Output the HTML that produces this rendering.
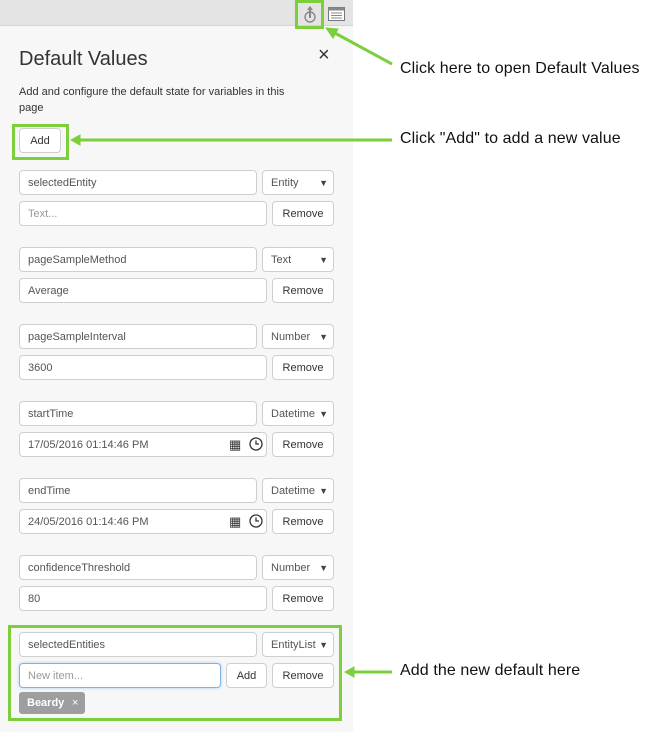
<!DOCTYPE html>
<html><head><meta charset="utf-8"><style>
*{box-sizing:border-box;margin:0;padding:0}
body{width:648px;height:732px;background:#fff;position:relative;font-family:"Liberation Sans",sans-serif;overflow:hidden}
.panel{position:absolute;left:0;top:0;width:353px;height:732px;background:#f7f7f7}
.top{position:absolute;left:0;top:0;width:353px;height:26px;background:#e4e4e4;border-bottom:1px solid #d4d4d4}
.a{position:absolute}
.in{position:absolute;height:25px;border:1px solid #cfcfcf;border-radius:4px;background:#fff;font-size:11px;color:#555;padding-left:8px;line-height:24px}
.btn{position:absolute;height:25px;border:1px solid #cfcfcf;border-radius:4px;background:#fff;font-size:11px;color:#333;text-align:center;line-height:24px}
.sel{position:absolute;height:25px;border:1px solid #cfcfcf;border-radius:4px;background:#fff;font-size:11px;color:#555;padding-left:8px;line-height:24px}
.sel::after{content:"▼";position:absolute;right:5px;top:0;font-size:9px;color:#444}
.g{position:absolute;border:3px solid #7ccf3b}
.t{position:absolute;left:400px;font-size:16px;color:#111;letter-spacing:0.1px}
.ph{color:#999}
</style></head><body>
<div class="panel"></div>
<div class="top"></div>
<div class="g" style="left:295px;top:0;width:29px;height:29px"></div>
<svg class="a" style="left:302px;top:5px" width="16" height="18" viewBox="0 0 16 18"><circle cx="8" cy="12" r="5" fill="none" stroke="#888" stroke-width="1.4"/><line x1="8" y1="2" x2="8" y2="13" stroke="#888" stroke-width="2"/><path d="M5 5 L8 1 L11 5Z" fill="#888"/></svg>
<svg class="a" style="left:328px;top:7px" width="17" height="14" viewBox="0 0 17 14"><rect x="0.5" y="0.5" width="16" height="13" fill="#fff" stroke="#777"/><rect x="0.5" y="0.5" width="16" height="3" fill="#888"/><line x1="3" y1="6" x2="14" y2="6" stroke="#888"/><line x1="3" y1="8.5" x2="14" y2="8.5" stroke="#888"/><line x1="3" y1="11" x2="14" y2="11" stroke="#888"/></svg>
<div class="a" style="left:19px;top:48px;font-size:20px;color:#333">Default Values</div>
<div class="a" style="left:318px;top:44px;font-size:20px;color:#333">×</div>
<div class="a" style="left:19px;top:84px;font-size:11px;color:#333;line-height:16px;width:280px">Add and configure the default state for variables in this page</div>
<div class="g" style="left:12px;top:124px;width:57px;height:36px"></div>
<div class="btn" style="left:19px;top:128px;width:42px">Add</div>

<div class="in" style="left:19px;top:170px;width:238px">selectedEntity</div><div class="sel" style="left:262px;top:170px;width:72px">Entity</div>
<div class="in ph" style="left:19px;top:201px;width:248px">Text...</div><div class="btn" style="left:272px;top:201px;width:62px">Remove</div>

<div class="in" style="left:19px;top:247px;width:238px">pageSampleMethod</div><div class="sel" style="left:262px;top:247px;width:72px">Text</div>
<div class="in" style="left:19px;top:278px;width:248px">Average</div><div class="btn" style="left:272px;top:278px;width:62px">Remove</div>

<div class="in" style="left:19px;top:324px;width:238px">pageSampleInterval</div><div class="sel" style="left:262px;top:324px;width:72px">Number</div>
<div class="in" style="left:19px;top:355px;width:248px">3600</div><div class="btn" style="left:272px;top:355px;width:62px">Remove</div>

<div class="in" style="left:19px;top:401px;width:238px">startTime</div><div class="sel" style="left:262px;top:401px;width:72px">Datetime</div>
<div class="in" style="left:19px;top:432px;width:248px">17/05/2016 01:14:46 PM</div><div class="btn" style="left:272px;top:432px;width:62px">Remove</div>
<div class="a" style="left:229px;top:437px;font-size:13px;color:#333">▦</div><svg class="a" style="left:249px;top:437px" width="14" height="14"><circle cx="7" cy="7" r="6" fill="none" stroke="#333" stroke-width="1.3"/><path d="M7 3.5V7H10" fill="none" stroke="#333" stroke-width="1.3"/></svg>

<div class="in" style="left:19px;top:478px;width:238px">endTime</div><div class="sel" style="left:262px;top:478px;width:72px">Datetime</div>
<div class="in" style="left:19px;top:509px;width:248px">24/05/2016 01:14:46 PM</div><div class="btn" style="left:272px;top:509px;width:62px">Remove</div>
<div class="a" style="left:229px;top:514px;font-size:13px;color:#333">▦</div><svg class="a" style="left:249px;top:514px" width="14" height="14"><circle cx="7" cy="7" r="6" fill="none" stroke="#333" stroke-width="1.3"/><path d="M7 3.5V7H10" fill="none" stroke="#333" stroke-width="1.3"/></svg>

<div class="in" style="left:19px;top:555px;width:238px">confidenceThreshold</div><div class="sel" style="left:262px;top:555px;width:72px">Number</div>
<div class="in" style="left:19px;top:586px;width:248px">80</div><div class="btn" style="left:272px;top:586px;width:62px">Remove</div>

<div class="g" style="left:8px;top:625px;width:334px;height:96px"></div>
<div class="in" style="left:19px;top:632px;width:238px">selectedEntities</div><div class="sel" style="left:262px;top:632px;width:72px">EntityList</div>
<div class="in ph" style="left:19px;top:663px;width:202px;border-color:#7fb2e5;box-shadow:0 0 3px #a9cdf0">New item...</div>
<div class="btn" style="left:226px;top:663px;width:41px">Add</div><div class="btn" style="left:272px;top:663px;width:62px">Remove</div>
<div class="a" style="left:19px;top:692px;width:66px;height:22px;background:#9e9e9e;border-radius:3px;color:#fff;font-size:11px;font-weight:bold;line-height:22px;padding-left:8px">Beardy<span style="position:absolute;left:53px;font-weight:normal">×</span></div>

<svg class="a" style="left:0;top:0" width="648" height="732">
<g stroke="#7ccf3b" stroke-width="3" fill="#7ccf3b">
<line x1="392" y1="64" x2="333" y2="32"/><path d="M326 28 L338 29 L333 38Z" stroke-width="1"/>
<line x1="392" y1="140" x2="78" y2="140"/><path d="M71 140 L80 135 L80 145Z" stroke-width="1"/>
<line x1="392" y1="672" x2="352" y2="672"/><path d="M345 672 L354 667 L354 677Z" stroke-width="1"/>
</g></svg>
<div class="t" style="top:60px">Click here to open Default Values</div>
<div class="t" style="top:130px">Click "Add" to add a new value</div>
<div class="t" style="top:662px">Add the new default here</div>
</body></html>
